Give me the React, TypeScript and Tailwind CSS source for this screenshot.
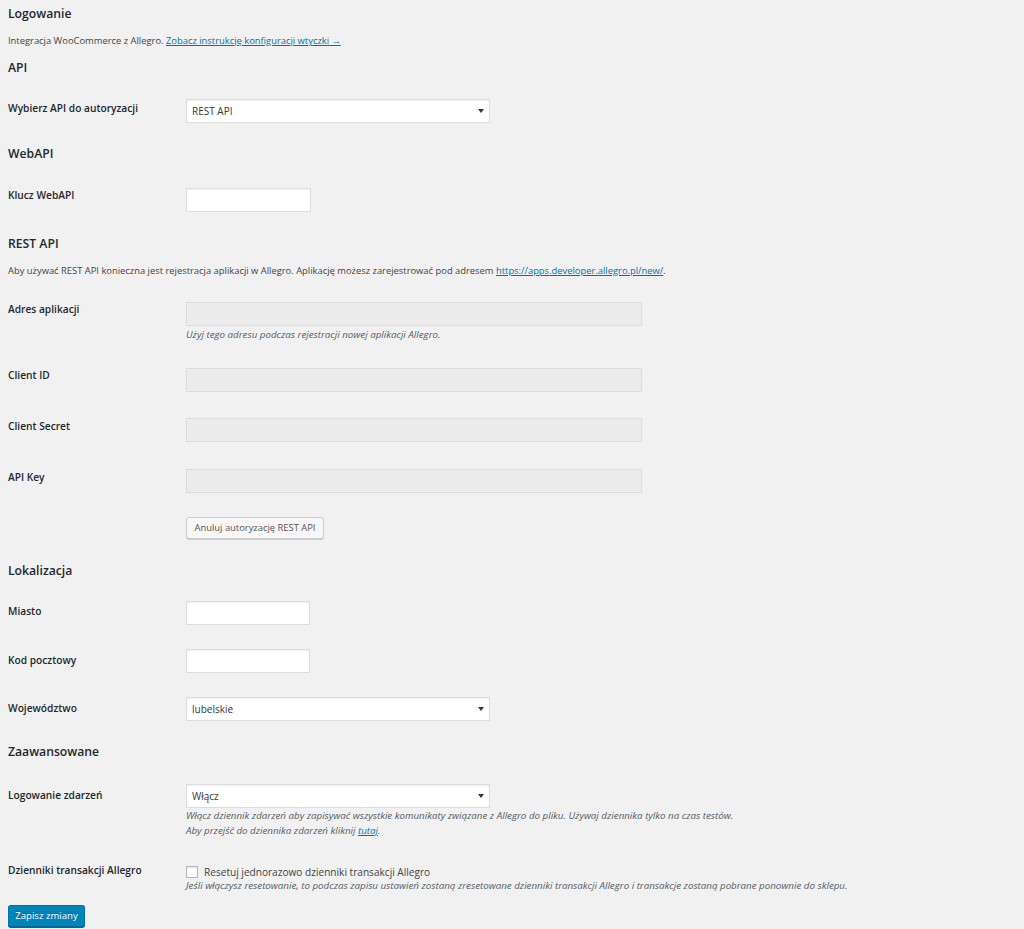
import React from "react";

const H2 = ({ children, mt }: { children: React.ReactNode; mt: string }) => (
  <h2 className={`${mt} text-[12.2px] leading-[16px] font-semibold text-[#23282d]`}>{children}</h2>
);

const Label = ({ children, pt }: { children: React.ReactNode; pt: string }) => (
  <div className={`w-[178px] shrink-0 ${pt} text-[10.2px] leading-[14px] font-semibold text-[#23282d]`}>{children}</div>
);

const Arrow = () => (
  <span className="w-0 h-0 border-l-[3px] border-r-[3px] border-t-[4px] border-l-transparent border-r-transparent border-t-[#32373c]" />
);

const Select = ({ value }: { value: string }) => (
  <div className="w-[304px] h-[24px] bg-white border border-[#dddddd] shadow-[inset_0_1px_2px_rgba(0,0,0,0.07)] flex items-center justify-between pl-[5px] pr-[5px] text-[10px] text-[#32373c]">
    <span>{value}</span>
    <Arrow />
  </div>
);

const Input = ({ w }: { w: string }) => (
  <div className={`${w} h-[24px] bg-white border border-[#dddddd] shadow-[inset_0_1px_2px_rgba(0,0,0,0.07)]`} />
);

const Disabled = () => (
  <div className="w-[456px] h-[24px] bg-[#ececec] border border-[#dcdcdc]" />
);

const Desc = ({ children, cls }: { children: React.ReactNode; cls: string }) => (
  <p className={`${cls} italic text-[9.75px] text-[#555d66]`}>{children}</p>
);

export default function App() {
  return (
    <div className="min-h-[929px] bg-[#f1f1f1] px-[8px] font-['Open_Sans','Noto_Sans',sans-serif] text-[#444444] flex flex-col">
      <H2 mt="mt-[6px]">Logowanie</H2>
      <p className="mt-[12px] text-[9.4px] leading-[14px]">
        Integracja WooCommerce z Allegro.{" "}
        <a className="text-[#0073aa] underline">Zobacz instrukcję konfiguracji wtyczki →</a>
      </p>

      <H2 mt="mt-[12px]">API</H2>
      <div className="flex">
        <Label pt="pt-[25px]">Wybierz API do autoryzacji</Label>
        <div className="pt-[23px]">
          <Select value="REST API" />
        </div>
      </div>

      <H2 mt="mt-[23px]">WebAPI</H2>
      <div className="flex">
        <Label pt="pt-[26px]">Klucz WebAPI</Label>
        <div className="pt-[26px]">
          <Input w="w-[125px]" />
        </div>
      </div>

      <H2 mt="mt-[24px]">REST API</H2>
      <p className="mt-[12px] text-[9.4px] leading-[14px]">
        Aby używać REST API konieczna jest rejestracja aplikacji w Allegro. Aplikację możesz zarejestrować pod adresem{" "}
        <a className="text-[#0073aa] underline">https://apps.developer.allegro.pl/new/</a>.
      </p>

      <div className="flex">
        <Label pt="pt-[24px]">Adres aplikacji</Label>
        <div className="pt-[24px]">
          <Disabled />
          <Desc cls="mt-[2px] leading-[14px]">Użyj tego adresu podczas rejestracji nowej aplikacji Allegro.</Desc>
        </div>
      </div>

      <div className="flex">
        <Label pt="pt-[26px]">Client ID</Label>
        <div className="pt-[26px]">
          <Disabled />
        </div>
      </div>

      <div className="flex">
        <Label pt="pt-[27px]">Client Secret</Label>
        <div className="pt-[26px]">
          <Disabled />
        </div>
      </div>

      <div className="flex">
        <Label pt="pt-[28px]">API Key</Label>
        <div className="pt-[27px]">
          <Disabled />
        </div>
      </div>

      <div className="flex">
        <div className="w-[178px] shrink-0" />
        <div className="pt-[24px]">
          <button className="block h-[22px] w-[138px] bg-[#f7f7f7] border border-[#cccccc] rounded-[3px] shadow-[0_1px_0_#cccccc] text-[9.4px] text-[#555555] leading-[20px]">
            Anuluj autoryzację REST API
          </button>
        </div>
      </div>

      <H2 mt="mt-[24px]">Lokalizacja</H2>
      <div className="flex">
        <Label pt="pt-[25px]">Miasto</Label>
        <div className="pt-[22px]">
          <Input w="w-[124px]" />
        </div>
      </div>
      <div className="flex">
        <Label pt="pt-[28px]">Kod pocztowy</Label>
        <div className="pt-[24px]">
          <Input w="w-[124px]" />
        </div>
      </div>
      <div className="flex">
        <Label pt="pt-[28px]">Województwo</Label>
        <div className="pt-[24px]">
          <Select value="lubelskie" />
        </div>
      </div>

      <H2 mt="mt-[23px]">Zaawansowane</H2>
      <div className="flex">
        <Label pt="pt-[28px]">Logowanie zdarzeń</Label>
        <div className="pt-[24px]">
          <Select value="Włącz" />
          <Desc cls="leading-[15px]">
            Włącz dziennik zdarzeń aby zapisywać wszystkie komunikaty związane z Allegro do pliku. Używaj dziennika tylko na czas testów.
            <br />
            Aby przejść do dziennika zdarzeń kliknij <a className="text-[#0073aa] underline">tutaj</a>.
          </Desc>
        </div>
      </div>
      <div className="flex">
        <Label pt="pt-[25px]">Dzienniki transakcji Allegro</Label>
        <div className="pt-[27px]">
          <div className="flex items-center gap-[6px] h-[14px]">
            <span className="w-[12px] h-[12px] bg-white border border-[#b4b9be] shadow-[inset_0_1px_2px_rgba(0,0,0,0.1)]" />
            <span className="text-[10.1px] leading-[14px] text-[#444444]">Resetuj jednorazowo dzienniki transakcji Allegro</span>
          </div>
          <Desc cls="leading-[14px]">
            Jeśli włączysz resetowanie, to podczas zapisu ustawień zostaną zresetowane dzienniki transakcji Allegro i transakcje zostaną pobrane ponownie do sklepu.
          </Desc>
        </div>
      </div>

      <div className="mt-[12px]">
        <button className="block h-[22px] w-[77px] bg-[#0085ba] border border-[#0073aa] border-b-[#006799] rounded-[3px] shadow-[0_1px_0_#006799] text-white text-[9.6px] leading-[20px] [text-shadow:0_-1px_1px_#006799]">
          Zapisz zmiany
        </button>
      </div>
    </div>
  );
}
